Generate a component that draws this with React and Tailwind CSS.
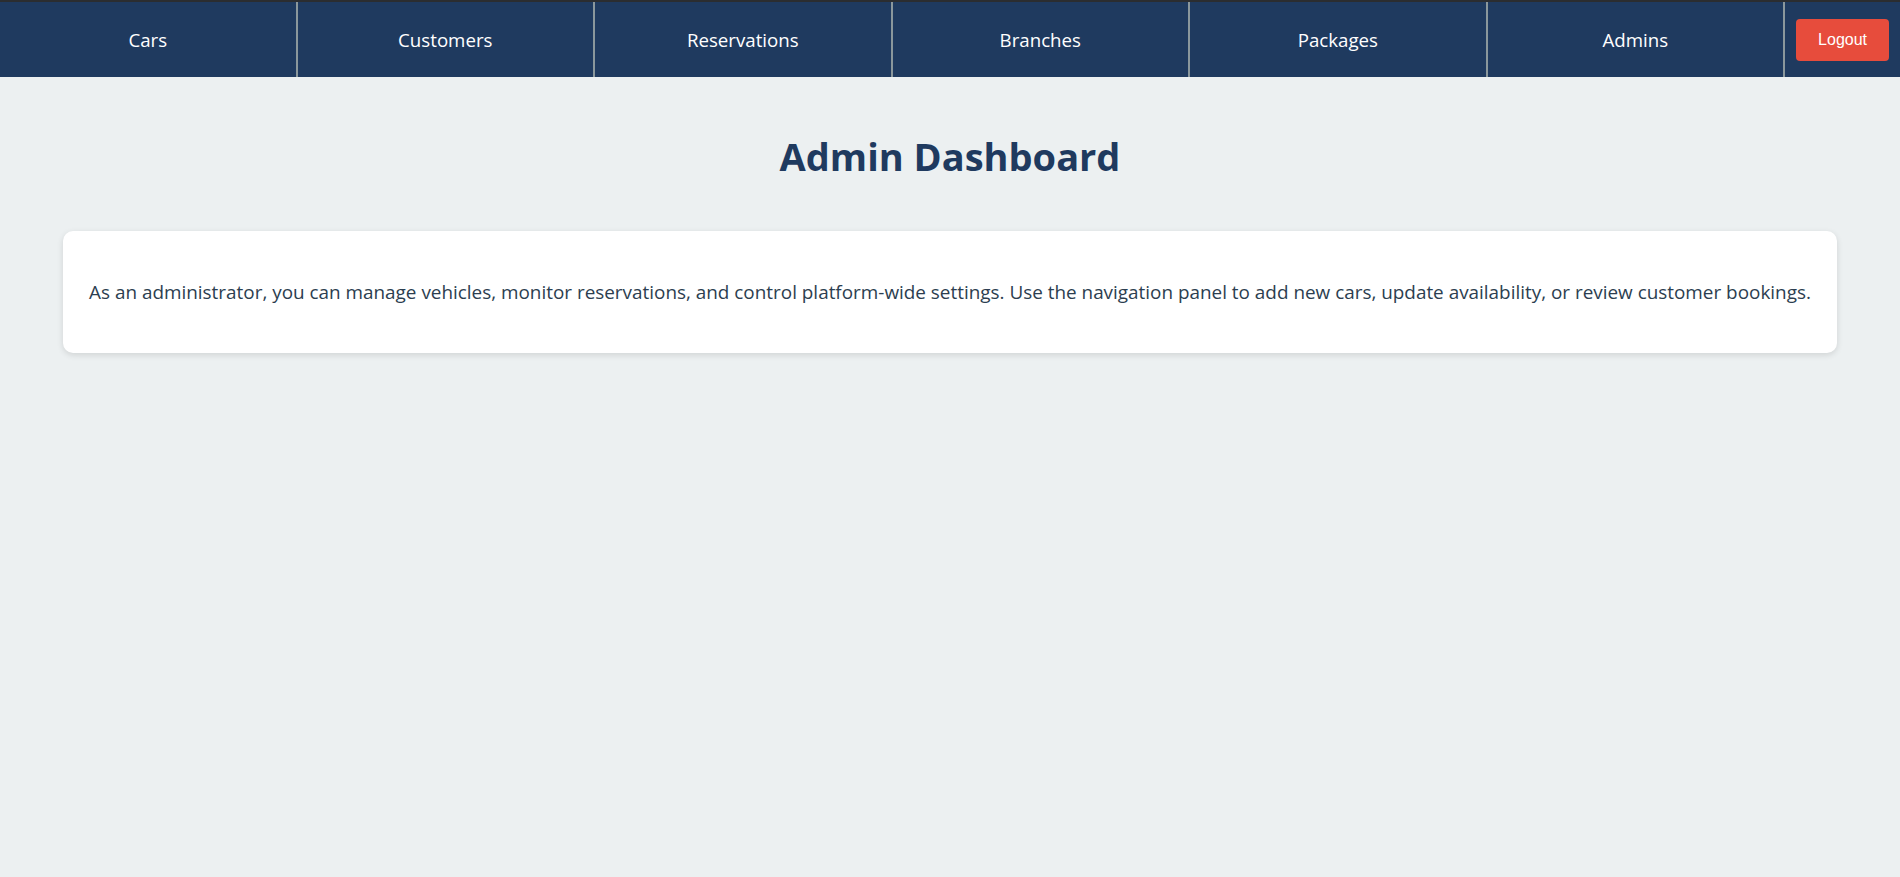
const links = ["Cars", "Customers", "Reservations", "Branches", "Packages", "Admins"]

function App() {
  return (
    <div className="min-h-screen bg-[#ecf0f1] font-['Open_Sans',sans-serif]">
      <nav className="flex h-[77px] bg-[#1f3a5f] border-t-2 border-[#2b2d30]">
        {links.map((name) => (
          <a
            key={name}
            href="#"
            className="flex-1 flex items-center justify-center pt-[2px] border-r-2 border-[#8a979c] text-white text-[18.7px]"
          >
            {name}
          </a>
        ))}
        <div className="flex items-center px-[11px]">
          <button className="bg-[#e74c3c] text-white rounded-[4px] px-[22px] h-[42px] text-[16px] font-['Liberation_Sans',Arial,sans-serif]">
            Logout
          </button>
        </div>
      </nav>

      <main className="px-[63px]">
        <h1 className="text-center text-[#1f3a5f] font-bold text-[38px] leading-none pt-[60px] pb-[56px]">
          Admin Dashboard
        </h1>
        <div className="bg-white rounded-[10px] shadow-[0_2px_6px_rgba(0,0,0,0.12)] px-[25px] py-[49px]">
          <p className="text-center text-[#2c3e50] text-[18.9px] leading-[24px]">
            As an administrator, you can manage vehicles, monitor reservations, and control platform-wide settings. Use the navigation panel to add new cars, update availability, or review customer bookings.
          </p>
        </div>
      </main>
    </div>
  )
}

export default App
